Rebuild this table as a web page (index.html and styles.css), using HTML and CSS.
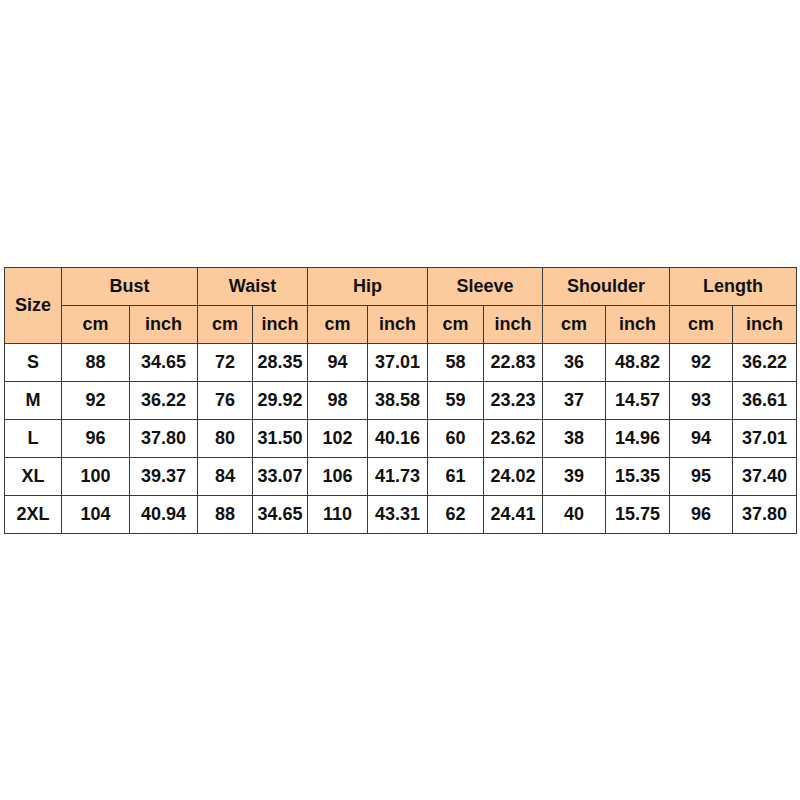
FILE: index.html
```html
<!DOCTYPE html>
<html>
<head>
<meta charset="utf-8">
<link rel="stylesheet" href="styles.css">
</head>
<body>
<div class="page">
<table class="size-table">
<colgroup>
<col class="c57"><col class="c68"><col class="c68"><col class="c55"><col class="c55"><col class="c60"><col class="c60"><col class="c56"><col class="c59"><col class="c63"><col class="c64"><col class="c63"><col class="c64">
</colgroup>
<thead>
<tr><th rowspan="2">Size</th><th colspan="2">Bust</th><th colspan="2">Waist</th><th colspan="2">Hip</th><th colspan="2">Sleeve</th><th colspan="2">Shoulder</th><th colspan="2">Length</th></tr>
<tr><th>cm</th><th>inch</th><th>cm</th><th>inch</th><th>cm</th><th>inch</th><th>cm</th><th>inch</th><th>cm</th><th>inch</th><th>cm</th><th>inch</th></tr>
</thead>
<tbody>
<tr><td>S</td><td>88</td><td>34.65</td><td>72</td><td>28.35</td><td>94</td><td>37.01</td><td>58</td><td>22.83</td><td>36</td><td>48.82</td><td>92</td><td>36.22</td></tr>
<tr><td>M</td><td>92</td><td>36.22</td><td>76</td><td>29.92</td><td>98</td><td>38.58</td><td>59</td><td>23.23</td><td>37</td><td>14.57</td><td>93</td><td>36.61</td></tr>
<tr><td>L</td><td>96</td><td>37.80</td><td>80</td><td>31.50</td><td>102</td><td>40.16</td><td>60</td><td>23.62</td><td>38</td><td>14.96</td><td>94</td><td>37.01</td></tr>
<tr><td>XL</td><td>100</td><td>39.37</td><td>84</td><td>33.07</td><td>106</td><td>41.73</td><td>61</td><td>24.02</td><td>39</td><td>15.35</td><td>95</td><td>37.40</td></tr>
<tr><td>2XL</td><td>104</td><td>40.94</td><td>88</td><td>34.65</td><td>110</td><td>43.31</td><td>62</td><td>24.41</td><td>40</td><td>15.75</td><td>96</td><td>37.80</td></tr>
</tbody>
</table>
</div>
</body>
</html>
```
FILE: styles.css
```css
html, body {
  margin: 0;
  padding: 0;
  background: #ffffff;
}
.page {
  padding: 267px 0 0 4px;
}
.size-table {
  border-collapse: collapse;
  table-layout: fixed;
  width: 792px;
  font-family: "Liberation Sans", Arial, sans-serif;
  font-weight: bold;
  font-size: 18px;
  color: #111;
}
.size-table th,
.size-table td {
  border: 1px solid #3a3a3a;
  height: 38px;
  padding: 0;
  text-align: center;
  vertical-align: middle;
  box-sizing: border-box;
}
.size-table th {
  background: #fccb9d;
  font-weight: bold;
}
.c57 { width: 57px; }
.c68 { width: 68px; }
.c55 { width: 55px; }
.c60 { width: 60px; }
.c56 { width: 56px; }
.c59 { width: 59px; }
.c63 { width: 63px; }
.c64 { width: 64px; }
```
